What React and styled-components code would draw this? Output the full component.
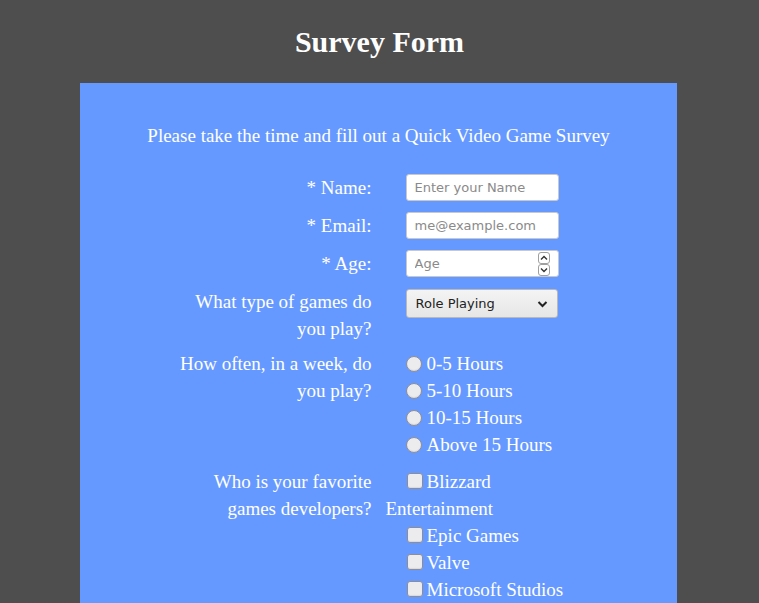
import React from 'react'
import styled, { createGlobalStyle } from 'styled-components'

const GlobalStyle = createGlobalStyle`
  body {
    margin: 0;
    background-color: #4e4e4e;
    font-family: "Liberation Serif", "Times New Roman", serif;
    color: #fff;
  }
`

const Header = styled.header`
  height: 83px;
  display: flex;
  align-items: center;
  justify-content: center;
`
const Title = styled.h1`
  margin: 0;
  font-size: 30px;
  font-weight: bold;
  color: #fff;
`
const Card = styled.main`
  width: 597px;
  margin: 0 82px 0 80px;
  background-color: #6699ff;
  padding: 39px 0 30px;
`
const Intro = styled.p`
  margin: 0 0 25px;
  text-align: center;
  font-size: 19px;
  line-height: 27px;
`
const Form = styled.form``
const Row = styled.div`
  display: grid;
  grid-template-columns: 1fr 1fr;
  column-gap: 14px;
  margin-bottom: ${p => p.$gap || 11}px;
  font-size: 19px;
  line-height: 27px;
`
const Label = styled.label`
  text-align: right;
  padding-left: 92px;
`
const Field = styled.div`
  display: flex;
  flex-direction: column;
  align-items: flex-start;
  padding-right: 90px;
`
const TextInput = styled.input`
  display: block;
  box-sizing: border-box;
  width: 153px;
  height: 27px;
  margin: 0 0 0 20px;
  padding: 0 8px;
  border: 1px solid #c8c8c8;
  border-radius: 3px;
  background: #fff;
  font-family: "DejaVu Sans", sans-serif;
  font-size: 13px;
  color: #222;
  outline: none;
  &::placeholder { color: #8a8a8a; }
`
const NumberBox = styled.div`
  box-sizing: border-box;
  width: 153px;
  height: 27px;
  margin-left: 20px;
  display: flex;
  align-items: center;
  border: 1px solid #c8c8c8;
  border-radius: 3px;
  background: #fff;
`
const NumberInput = styled.input`
  flex: 1;
  min-width: 0;
  border: none;
  outline: none;
  padding: 0 8px;
  background: transparent;
  font-family: "DejaVu Sans", sans-serif;
  font-size: 13px;
  &::placeholder { color: #8a8a8a; }
`
const Spinner = styled.div`
  display: flex;
  flex-direction: column;
  margin-right: 8px;
`
const SpinButton = styled.span`
  width: 12px;
  height: 12px;
  box-sizing: border-box;
  border: 1px solid #a0a0a0;
  border-radius: 3px;
  background: #fff;
  display: flex;
  align-items: center;
  justify-content: center;
`
const Select = styled.div`
  box-sizing: border-box;
  width: 152px;
  height: 29px;
  margin: 1px 0 0 20px;
  display: flex;
  align-items: center;
  justify-content: space-between;
  padding: 0 9px 0 9px;
  border: 1px solid #b9b9b9;
  border-radius: 3px;
  background: linear-gradient(#f4f4f4, #e6e6e6);
  font-family: "DejaVu Sans", sans-serif;
  font-size: 13px;
  line-height: normal;
  color: #222;
`
const Option = styled.label`
  display: flex;
  align-items: center;
`
const Radio = styled.input.attrs({ type: 'radio' })`
  appearance: none;
  width: 16px;
  height: 16px;
  margin: 0 5px 0 20px;
  border: 1px solid #8d8d96;
  border-radius: 50%;
  background: #ececef;
  box-shadow: inset 0 -1px 1px rgba(0,0,0,0.08);
  flex-shrink: 0;
`
const Check = styled.input.attrs({ type: 'checkbox' })`
  appearance: none;
  width: 16px;
  height: 16px;
  margin: 0 4px 0 21px;
  vertical-align: -1px;
  border: 1px solid #8d8d96;
  border-radius: 3px;
  background: #ececef;
  box-shadow: inset 0 -1px 1px rgba(0,0,0,0.08);
`
const CheckLine = styled.div``

const Chevron = ({ up }) => (
  <svg width="8" height="6" viewBox="0 0 8 6">
    <path d={up ? 'M1 4.5 L4 1.5 L7 4.5' : 'M1 1.5 L4 4.5 L7 1.5'} fill="none" stroke="#333" strokeWidth="1.4" />
  </svg>
)

const hours = ['0-5 Hours', '5-10 Hours', '10-15 Hours', 'Above 15 Hours']
const devs = ['Blizzard Entertainment', 'Epic Games', 'Valve', 'Microsoft Studios']

const App = () => {
  return (
    <>
      <GlobalStyle />
      <Header>
        <Title>Survey Form</Title>
      </Header>
      <Card>
        <Intro>Please take the time and fill out a Quick Video Game Survey</Intro>
        <Form>
          <Row>
            <Label>* Name:</Label>
            <Field><TextInput placeholder="Enter your Name" /></Field>
          </Row>
          <Row>
            <Label>* Email:</Label>
            <Field><TextInput placeholder="me@example.com" /></Field>
          </Row>
          <Row>
            <Label>* Age:</Label>
            <Field>
              <NumberBox>
                <NumberInput placeholder="Age" />
                <Spinner>
                  <SpinButton><Chevron up /></SpinButton>
                  <SpinButton><Chevron /></SpinButton>
                </Spinner>
              </NumberBox>
            </Field>
          </Row>
          <Row $gap={8}>
            <Label>What type of games do you play?</Label>
            <Field>
              <Select>
                <span>Role Playing</span>
                <svg width="11" height="8" viewBox="0 0 11 8">
                  <path d="M1.5 2 L5.5 6 L9.5 2" fill="none" stroke="#222" strokeWidth="2" />
                </svg>
              </Select>
            </Field>
          </Row>
          <Row $gap={10}>
            <Label>How often, in a week, do you play?</Label>
            <Field>
              {hours.map(h => (
                <Option key={h}><Radio name="hours" />{h}</Option>
              ))}
            </Field>
          </Row>
          <Row>
            <Label>Who is your favorite games developers?</Label>
            <Field>
              {devs.map(d => (
                <CheckLine key={d}><Check />{d}</CheckLine>
              ))}
            </Field>
          </Row>
        </Form>
      </Card>
    </>
  )
}

export default App
